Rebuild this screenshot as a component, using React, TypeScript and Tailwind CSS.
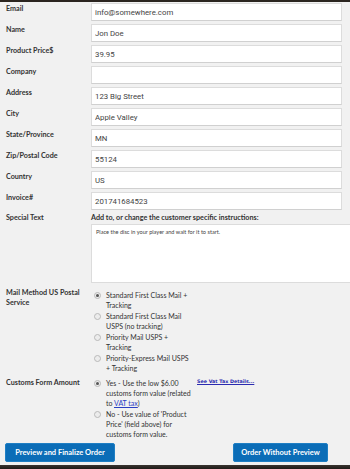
import React from 'react';

const fields = [
  { label: 'Email', value: 'info@somewhere.com' },
  { label: 'Name', value: 'Jon Doe' },
  { label: 'Product Price$', value: '39.95' },
  { label: 'Company', value: '' },
  { label: 'Address', value: '123 Big Street' },
  { label: 'City', value: 'Apple Valley' },
  { label: 'State/Province', value: 'MN' },
  { label: 'Zip/Postal Code', value: '55124' },
  { label: 'Country', value: 'US' },
  { label: 'Invoice#', value: '201741684523' },
];

const mailOptions = [
  'Standard First Class Mail + Tracking',
  'Standard First Class Mail USPS (no tracking)',
  'Priority Mail USPS + Tracking',
  'Priority-Express Mail USPS + Tracking',
];

function Radio({ checked }: { checked?: boolean }) {
  return (
    <span className="mt-[2px] ml-[3px] mr-[5px] flex h-[7px] w-[7px] shrink-0 items-center justify-center rounded-full border border-[#b9b9b9] bg-[#ececec]">
      {checked && <span className="h-[3px] w-[3px] rounded-full bg-[#555]" />}
    </span>
  );
}

export default function App() {
  return (
    <div className="relative flex h-[469px] w-[350px] flex-col overflow-hidden bg-[#f1f1f1] font-['Lato',sans-serif] text-[#333]">
      <div className="h-[2px] shrink-0 bg-[#2b2520]" />

      <div className="flex flex-1 flex-col pt-[1px]">
        {fields.map(({ label, value }) => (
          <div key={label} className="mb-[3px] flex">
            <div className="w-[91px] shrink-0 pl-[6px] pt-[1px] text-[7.2px] font-bold leading-[10px]">{label}</div>
            <input
              readOnly
              value={value}
              className="h-[18px] w-[251px] border border-[#dcdcdc] border-b-[#d0d0d0] bg-white px-[3px] font-['Roboto',sans-serif] text-[7.8px] text-[#444] outline-none"
            />
          </div>
        ))}

        <div className="flex">
          <div className="w-[91px] shrink-0 pl-[6px] text-[7.2px] font-bold leading-[10px]">Special Text</div>
          <div className="flex shrink-0 flex-col">
            <div className="text-[7.2px] font-bold leading-[10px]">
              Add to, or change the customer specific instructions:
            </div>
            <textarea
              readOnly
              value="Place the disc in your player and wait for it to start."
              className="mt-[1px] h-[59px] w-[265px] resize-none border border-[#dcdcdc] bg-white px-[4px] py-[3px] text-[5.6px] leading-[8px] text-[#444] outline-none"
            />
          </div>
        </div>

        <div className="mt-[5px] flex">
          <div className="w-[91px] shrink-0 pl-[6px] text-[7.2px] font-bold leading-[10px]">
            Mail Method US Postal Service
          </div>
          <div className="flex w-[101px] shrink-0 flex-col gap-[1px] pt-[2px]">
            {mailOptions.map((opt, i) => (
              <div key={opt} className="flex text-[7px] leading-[10px]">
                <Radio checked={i === 0} />
                <span>{opt}</span>
              </div>
            ))}
          </div>
        </div>

        <div className="mt-[5px] flex">
          <div className="w-[91px] shrink-0 pl-[6px] text-[7.2px] font-bold leading-[10px]">Customs Form Amount</div>
          <div className="flex w-[101px] shrink-0 flex-col gap-[1px]">
            <div className="flex text-[7px] leading-[10px]">
              <Radio checked />
              <span>
                Yes - Use the low $6.00 customs form value (related to{' '}
                <a href="#" className="text-[#2a3fc4] underline">VAT tax</a>)
              </span>
            </div>
            <div className="flex text-[7px] leading-[10px]">
              <Radio />
              <span>No - Use value of 'Product Price' (field above) for customs form value.</span>
            </div>
          </div>
          <a href="#" className="ml-[5px] pt-[1px] font-['DejaVu_Sans',sans-serif] text-[4.8px] font-bold leading-[6px] text-[#2b2bb0] underline">
            See Vat Tax Details...
          </a>
        </div>

        <div className="mt-[4px] flex justify-between pl-[5px] pr-[22px]">
          <button className="h-[19px] w-[110px] rounded-[2px] border border-[#1f7fc4] bg-[#0b6db7] text-[7.5px] font-bold text-white">
            Preview and Finalize Order
          </button>
          <button className="h-[19px] w-[95px] rounded-[2px] border border-[#1f7fc4] bg-[#0b6db7] text-[7.5px] font-bold text-white">
            Order Without Preview
          </button>
        </div>
      </div>

      <div className="h-[4px] shrink-0 bg-gradient-to-b from-[#3a3430] to-[#1e1a17]" />
    </div>
  );
}
